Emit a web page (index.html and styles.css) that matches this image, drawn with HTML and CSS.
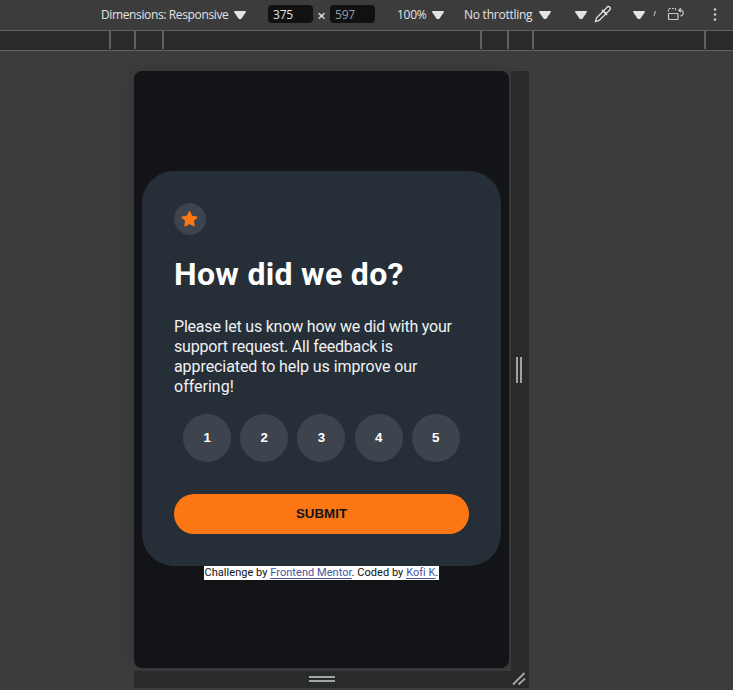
FILE: index.html
```html
<!DOCTYPE html>
<html lang="en">
<head>
<meta charset="utf-8">
<title>Interactive rating component</title>
<link rel="stylesheet" href="styles.css">
</head>
<body>
<header class="toolbar">
  <span class="label dimensions">Dimensions: Responsive</span>
  <i class="caret"></i>
  <span class="field width">375</span>
  <span class="times">×</span>
  <span class="field height">597</span>
  <span class="label zoom">100%</span>
  <i class="caret"></i>
  <span class="label throttle">No throttling</span>
  <i class="caret"></i>
  <i class="caret vision"></i>
  <svg class="dropper" width="18" height="18" viewBox="0 0 18 18" fill="none" stroke="#e3e3e3" stroke-width="1.3"><path d="M1.5 16.5 2.6 12.8 9.4 6 12 8.6 5.2 15.4Z"/><path d="M8 4.8 13.2 10M9.5 6.2 13 2.1C14.6.3 17.5 2.8 15.9 4.8L12 8.7"/></svg>
  <i class="caret sensor"></i>
  <svg class="sliver" width="3" height="6" viewBox="0 0 3 6" stroke="#c8c8c8"><path d="M2.4 0 1 5"/></svg>
  <svg class="rotate" width="18" height="14" viewBox="0 0 18 14" fill="none" stroke="#c7c7c7" stroke-width="1.2"><rect x="1.5" y="6.5" width="9.5" height="6" rx=".7"/><path d="M1.5 4.6V1.5H8.5V4.6" stroke-dasharray="2 1.3"/><path d="M14 1.2 11.7 3.2 14 5.2M12 3.2H13.5C17.2 3.2 17.2 9 13.2 9"/></svg>
  <svg class="more" width="4" height="16" viewBox="0 0 4 16" fill="#d0d0d0"><circle cx="2" cy="2.5" r="1.3"/><circle cx="2" cy="7.5" r="1.3"/><circle cx="2" cy="12.5" r="1.3"/></svg>
</header>
<div class="ruler"><i></i><i></i><i></i><i></i><i></i><i></i><i></i></div>
<div class="stage">
  <div class="device">
    <main class="card">
      <div class="star"><svg width="17" height="16" viewBox="0 0 17 16"><path d="m9.07.36 2.03 4.11c.09.18.26.31.46.34l4.54.66c.5.07.7.68.34 1.04l-3.28 3.2a.61.61 0 0 0-.18.54l.78 4.52c.08.5-.44.88-.89.64l-4.06-2.13a.61.61 0 0 0-.57 0l-4.06 2.13c-.45.24-.97-.14-.89-.64l.78-4.52a.61.61 0 0 0-.18-.54L.61 6.51c-.36-.36-.16-.97.34-1.04l4.54-.66c.2-.03.37-.16.46-.34L7.98.36a.61.61 0 0 1 1.09 0Z" fill="#fc7614"/></svg></div>
      <h1>How did we do?</h1>
      <p class="message"><span class="l1">Please let us know how we did with your</span><span class="l2">support request. All feedback is</span><span class="l3">appreciated to help us improve our</span><span class="l4">offering!</span></p>
      <div class="ratings"><button>1</button><button>2</button><button>3</button><button>4</button><button>5</button></div>
      <button class="submit">SUBMIT</button>
    </main>
    <footer>Challenge by <a href="#">Frontend Mentor</a>. Coded by <a href="#">Kofi K</a>.</footer>
  </div>
  <div class="handle side"><i></i><i></i></div>
  <div class="handle bottom"><span><i></i><i></i></span></div>
  <div class="handle corner"><svg width="14" height="14" viewBox="0 0 14 14" stroke="#a7a9a9" stroke-width="1.8"><path d="M1 12.5 12.5 1M6.5 12.5 13 6.7"/></svg></div>
</div>
</body>
</html>
```
FILE: styles.css
```css
* { box-sizing: border-box; }
body { margin: 0; width: 733px; height: 690px; overflow: hidden; background: #3c3c3c; font-family: Roboto, sans-serif; }
button { border: 0; padding: 0; font: bold 13.33px "Liberation Sans", sans-serif; }

.toolbar { display: flex; align-items: center; height: 30px; padding-left: 101px; color: #e3e3e3; font: 12px/30px "Open Sans", sans-serif; white-space: nowrap; }
.toolbar > * { flex: none; }
.label { letter-spacing: -.25px; }
.dimensions { width: 133px; letter-spacing: -.37px; }
.zoom { width: 35px; margin-left: 22px; }
.throttle { width: 75px; margin-left: 20px; }
.caret { width: 12px; height: 8px; background: #e3e3e3; clip-path: polygon(4% 0, 96% 0, 100% 14%, 60% 100%, 40% 100%, 0 14%); }
.field { width: 45px; height: 18px; margin-top: -2px; padding-left: 5px; border-radius: 4px; background: #111; color: #e3e3e3; line-height: 20px; letter-spacing: -.2px; }
.width { margin-left: 22px; }
.height { color: #9a9fa4; }
.times { width: 17px; text-align: center; font-size: 15px; font-weight: 600; }
.vision { margin-left: 24px; }
.dropper { margin: -3px 0 0 7px; }
.sensor { margin-left: 21px; }
.sliver { margin: -2px 0 0 8px; }
.rotate { margin: -2px 0 0 11px; }
.more { margin: 0 0 0 28px; }

.ruler { display: flex; height: 21px; padding-bottom: 1px; background: #292a2b; border-top: 1px solid #626262; border-bottom: 1px solid #626262; }
.ruler i { flex: none; border-right: 2px solid #626262; }
.ruler i:nth-child(1) { width: 111px; }
.ruler i:nth-child(2) { width: 25px; }
.ruler i:nth-child(3) { width: 28px; }
.ruler i:nth-child(4) { width: 318px; }
.ruler i:nth-child(5) { width: 27px; }
.ruler i:nth-child(6) { width: 25px; }
.ruler i:nth-child(7) { width: 172px; }

.stage { display: grid; grid-template: 597px 17px / 375px 18px; gap: 3px 2px; padding: 20px 0 0 134px; }
.device { padding: 100px 8px 0; border-radius: 8px; background: #131418; box-shadow: 0 0 14px rgba(0, 0, 0, .16); text-align: center; }
.card { height: 395px; padding: 32px; border-radius: 32px; background: #262e37; color: #fff; text-align: left; }
.star { display: grid; place-items: center; width: 32px; height: 32px; border-radius: 50%; background: #3d444d; }
.star svg { margin-left: -1px; }
h1 { margin: 19px 0 0; font: bold 32px/40px Roboto, sans-serif; letter-spacing: .32px; white-space: nowrap; }
.message { margin: 23px 0 17px; font-size: 16px; line-height: 20px; color: #f0f2f3; white-space: nowrap; }
.message span { display: block; }
.l1 { letter-spacing: -.2px; }
.l2 { letter-spacing: -.19px; }
.l3 { letter-spacing: -.08px; }
.ratings { display: flex; justify-content: space-evenly; }
.ratings button { width: 48px; height: 48px; padding-bottom: 2px; border-radius: 50%; background: #3d444d; color: #fff; }
.submit { display: block; width: 100%; height: 40px; margin-top: 32px; padding-bottom: 2px; border-radius: 20px; background: #fc7614; color: #131418; }
footer { width: 235px; height: 14px; margin: 0 auto; background: #fff; color: #111; font-size: 11px; line-height: 14px; letter-spacing: .04px; white-space: nowrap; }
footer a { color: #4656a0; text-underline-offset: 2px; }

.handle { display: flex; align-items: center; justify-content: center; background: #292a2b; }
.side { gap: 2px; margin-bottom: -3px; padding: 0 2px 2px 0; }
.side i { width: 2px; height: 26px; background: #a0a2a2; }
.bottom { margin-right: -2px; padding: 0 2px 2px 0; }
.bottom span { display: grid; gap: 2px; }
.bottom i { width: 26px; height: 2px; background: #a0a5a4; }
.corner { padding: 0 2px 2px 0; }
```
